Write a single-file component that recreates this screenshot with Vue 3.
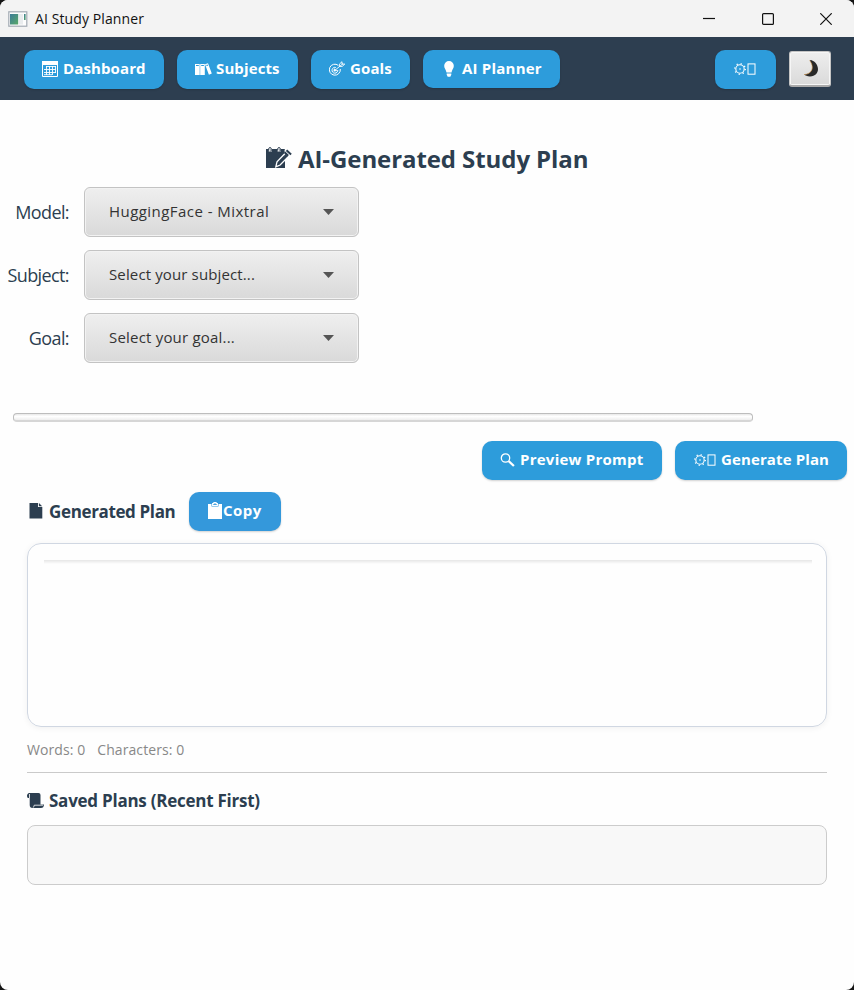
<script setup>
import { ref } from 'vue'

const fields = ref([
  { label: 'Model:', value: 'HuggingFace - Mixtral', kind: 'model' },
  { label: 'Subject:', value: 'Select your subject...', kind: 'subject' },
  { label: 'Goal:', value: 'Select your goal...', kind: 'goal' },
])
const words = ref(0)
const characters = ref(0)
</script>

<template>
  <div class="desktop">
    <div class="window">
      <header class="titlebar">
        <svg class="app-icon" width="20" height="16" viewBox="0 0 20 16">
          <defs>
            <linearGradient id="pane" x1="0" y1="0" x2="1" y2="1">
              <stop offset="0" stop-color="#3c7d98" />
              <stop offset="1" stop-color="#58a868" />
            </linearGradient>
          </defs>
          <rect x="0.8" y="0.8" width="18" height="14.4" fill="#fdfdfd" stroke="#a3abb3" stroke-width="1.2" />
          <rect x="2" y="3" width="8.2" height="10.5" fill="url(#pane)" />
          <rect x="11" y="3" width="4" height="10.5" fill="#e9ecee" />
          <rect x="16" y="3" width="1.6" height="6" fill="url(#pane)" />
        </svg>
        <span class="app-name">AI Study Planner</span>
        <div class="controls">
          <svg width="12" height="12" viewBox="0 0 12 12"><path d="M0 5.5h12" /></svg>
          <svg width="12" height="12" viewBox="0 0 12 12"><rect x="0.6" y="0.6" width="10.8" height="10.8" rx="1" /></svg>
          <svg width="12" height="12" viewBox="0 0 12 12"><path d="M0.3 0.3l11.4 11.4M11.7 0.3L0.3 11.7" /></svg>
        </div>
      </header>

      <nav class="nav">
        <button class="btn dashboard">
          <svg width="16" height="16" viewBox="0 0 16 16" fill="none" stroke="#fff">
            <path d="M0 0h16v4H0z" fill="#fff" stroke="none" />
            <path d="M.5 3v12.5h15V3" />
            <path d="M4 5.5h10M2 8.5h12M2 11.5h12M2 13.7h8M4.5 5v9M7.5 5v9M10.5 5v9M13.5 5v7" stroke-width=".9" />
          </svg>
          <span>Dashboard</span>
        </button>
        <button class="btn subjects">
          <svg width="17" height="12" viewBox="0 0 17 12" fill="#fff">
            <path fill-rule="evenodd" d="M0 1h4.7v11H0zM1 2v1h2.8V2zM5.2 1h4.6v11H5.2zM6.2 2v1h2.7V2z" />
            <path fill-rule="evenodd" d="M10 1.2L13 .2l3.8 10.4-2.9 1.1zM11.2 2l.5 1.2 1.3-.5-.4-1.2z" />
          </svg>
          <span>Subjects</span>
        </button>
        <button class="btn goals">
          <svg width="17" height="16" viewBox="0 0 17 16" fill="none" stroke="#fff">
            <path d="M9.3 4.4A5.5 5.5 0 1 0 11.3 8" stroke-width="1" />
            <path d="M6.8 6.5A2.9 2.9 0 1 0 8.8 9" stroke-width="1" />
            <path d="M6 9.3L14 2.6M10.4 5.4V3.1L13 .7v2.4h2.8L13.2 5.4z" stroke-width=".9" />
            <path d="M4.8 10.3l.4-2.600 2.600 1.900z" fill="#fff" stroke-width=".6" />
          </svg>
          <span>Goals</span>
        </button>
        <button class="btn planner">
          <svg width="10" height="16" viewBox="0 0 10 16" fill="#fff">
            <path d="M5 0a4.8 4.8 0 0 1 4.8 4.9c0 2.5-1.9 3.6-2.3 6.6h-5C2.1 8.5.2 7.4.2 4.9A4.8 4.8 0 0 1 5 0zM2.7 12.5h4.6v1.3L6.3 15.800H3.700l-1-2z" />
          </svg>
          <span>AI Planner</span>
        </button>
        <div class="spacer"></div>
        <button class="btn settings">
          <svg width="22" height="14" viewBox="0 0 22 14" fill="none" stroke="#fff">
            <circle cx="6" cy="7" r="4.200" stroke-width="1.100" />
            <circle cx="6" cy="7" r="5.300" stroke-width="1.300" stroke-dasharray="1.200 2.963" />
            <circle cx="6" cy="7" r=".8" fill="#fff" stroke="none" />
            <rect x="14" y="1.900" width="7" height="10.300" />
          </svg>
        </button>
        <button class="theme">
          <svg width="15" height="17" viewBox="0 0 15 17">
            <path d="M7 0c9.600 3.200 9.400 16.600-1.100 16.500C3.300 16.500 1.300 15.700 0 14.600 8.200 14.200 10.700 7.200 5.700.400z" fill="#292929" />
            <path d="M5.700.400c5 6.800 2.500 13.800-5.700 14.200" fill="none" stroke="#d99a4b" stroke-width=".6" />
          </svg>
        </button>
      </nav>

      <main class="content">
        <h1 class="title">
          <svg width="26" height="22" viewBox="0 0 26 22">
            <path d="M0 2h19v19H0z" fill="#2c3e50" />
            <path d="M3.500 0v4.500M7 0v0M5.200 1v3.500M12.300 0v4.500M14 1v3.500" stroke="#fefefe" stroke-width="1.500" />
            <path d="M2.800 3.500V1.200q1.200-1.500 2.400 0v3M11.800 3.500V1.200q1.200-1.500 2.400 0v3" fill="none" stroke="#2c3e50" stroke-width="1" />
            <path d="M9.800 19.800l1.200-5 8.500-8.800 3.200 3.200-8.600 8.800z" fill="#2c3e50" stroke="#fefefe" stroke-width="1.300" />
            <path d="M19 12.500V10l-.5-7.500H21l-2 2z" fill="#fefefe" />
            <path d="M18.600 5.300l3.600 3.400M20.500 3.300l4.600 4.200" stroke="#2c3e50" stroke-width="2" />
          </svg>
          <span>AI-Generated Study Plan</span>
        </h1>

        <section class="form">
          <template v-for="field in fields" :key="field.kind">
            <label class="label">{{ field.label }}</label>
            <div class="combo">
              <span :class="'value-' + field.kind">{{ field.value }}</span>
              <svg width="11" height="6" viewBox="0 0 11 6"><path d="M0 0h11L5.500 6z" fill="#555" /></svg>
            </div>
          </template>
        </section>

        <div class="progress"></div>

        <div class="actions">
          <button class="btn preview">
            <svg width="15" height="14" viewBox="0 0 15 14" fill="none" stroke="#fff">
              <circle cx="5.500" cy="5" r="4.200" stroke-width="1.300" />
              <path d="M8.600 8l5.300 5" stroke-width="2.300" />
            </svg>
            <span>Preview Prompt</span>
          </button>
          <button class="btn generate">
            <svg width="22" height="14" viewBox="0 0 22 14" fill="none" stroke="#fff">
              <circle cx="6" cy="7" r="4.200" stroke-width="1.100" />
              <circle cx="6" cy="7" r="5.300" stroke-width="1.300" stroke-dasharray="1.200 2.963" />
              <circle cx="6" cy="7" r=".8" fill="#fff" stroke="none" />
              <rect x="14" y="1.900" width="7" height="10.300" />
            </svg>
            <span>Generate Plan</span>
          </button>
        </div>

        <section class="plan">
          <div class="plan-head">
            <h2 class="heading generated">
              <svg width="16" height="16" viewBox="0 0 16 16">
                <path d="M.500 0h8.500v4H13.300v11.500H.5z" fill="#2c3e50" />
                <path d="M9.900 0l3.300 3.300H9.900z" fill="#2c3e50" />
              </svg>
              <span>Generated Plan</span>
            </h2>
            <button class="btn copy">
              <svg width="14" height="17" viewBox="0 0 14 17">
                <path d="M0 2h3.500v2.500h7V2H14v15H0z" fill="#fff" />
                <path d="M4.600 3.500V1.600h1.300V.6h2.200v1h1.300v1.900z" fill="none" stroke="#fff" stroke-width="1.100" />
              </svg>
              <span>Copy</span>
            </button>
          </div>
          <div class="output"><div class="output-edge"></div></div>
          <div class="stats"><span>Words: {{ words }}</span><span class="chars">Characters: {{ characters }}</span></div>
          <hr class="rule" />
          <h2 class="heading saved">
            <svg width="17" height="16" viewBox="0 0 17 16">
              <path d="M2 0h9.500q2 0 2 2v9.500H17q-.2 3.500-3 3.500H5.500q-2.800 0-2.800-3V5H.8Q-.5 3.500.3 1.500 1 .2 2 0z" fill="#2c3e50" />
              <path d="M2.500 1v4M16 12.200H7.200q.2 1.800-1.400 2.300" fill="none" stroke="#fff" stroke-width=".8" />
            </svg>
            <span>Saved Plans (Recent First)</span>
          </h2>
          <div class="saved-list"></div>
        </section>
      </main>
    </div>
  </div>
</template>

<style>
body {
  background: #151515;
}
</style>

<style scoped>
* {
  box-sizing: border-box;
}
.desktop {
  width: 854px;
  height: 990px;
  background: #151515;
  font-family: "Open Sans", "Noto Sans", sans-serif;
  color: #2c3e50;
}
.window {
  display: flex;
  flex-direction: column;
  height: 990px;
  border-radius: 8px;
  overflow: hidden;
  background: #fefefe;
}
svg {
  display: block;
  flex: none;
}
span {
  white-space: nowrap;
}
.titlebar {
  display: flex;
  align-items: center;
  height: 37px;
  padding: 0 22px 0 8px;
  background: #f3f3f3;
  color: #111;
}
.app-name {
  margin-left: 7px;
  font-size: 14px;
  letter-spacing: 0.1px;
}
.controls {
  display: flex;
  gap: 46.5px;
  margin-left: auto;
}
.controls svg {
  fill: none;
  stroke: #111;
  stroke-width: 1.2;
}
.nav {
  display: flex;
  align-items: flex-start;
  gap: 13px;
  height: 63px;
  padding: 13px 23px 0 24px;
  background: #2d3e50;
}
.spacer {
  flex: 1;
}
.btn {
  display: flex;
  align-items: center;
  height: 39px;
  padding: 0 0 2px 18px;
  border: 0;
  border-radius: 10px;
  background: #2d9cdb;
  box-shadow: 0 1px 2px rgba(0, 0, 0, 0.18);
  color: #fff;
  font-family: inherit;
  font-size: 15px;
  font-weight: 700;
  line-height: 20px;
}
.btn span {
  margin-left: 5px;
  padding-bottom: 2px;
  letter-spacing: 0.12px;
}
.dashboard { width: 140px; }
.subjects { width: 121px; }
.subjects span { margin-left: 4px; }
.goals { width: 99px; }
.goals span { margin-left: 4px; }
.planner {
  width: 137px;
  height: 38px;
  padding-left: 21px;
  padding-bottom: 0;
}
.planner span {
  margin-left: 8px;
  letter-spacing: 0.22px;
}
.settings {
  width: 61px;
  padding-left: 19px;
}
.theme {
  display: flex;
  align-items: center;
  justify-content: center;
  width: 42px;
  height: 36px;
  margin-top: 1px;
  padding: 0 0 1px 3px;
  border: 1px solid #c4c4c4;
  border-bottom: 2px solid #aaa;
  border-radius: 3px;
  background: linear-gradient(#eee, #dadada);
  box-shadow: inset 0 0 0 1px #f6f6f6;
}
.content {
  display: flex;
  flex-direction: column;
}
.title {
  display: flex;
  align-items: center;
  height: 34px;
  margin: 42px 0 11px 266px;
  font-size: 24px;
  font-weight: 700;
  line-height: 34px;
}
.title svg {
  margin-bottom: 2px;
}
.title span {
  margin-left: 6px;
  letter-spacing: -0.08px;
}
.form {
  display: grid;
  grid-template-columns: 69px 275px;
  grid-auto-rows: 50px;
  column-gap: 15px;
  row-gap: 13px;
}
.label {
  align-self: center;
  text-align: right;
  font-size: 18px;
  font-weight: 400;
  letter-spacing: -0.6px;
}
.combo {
  display: flex;
  align-items: center;
  justify-content: space-between;
  padding: 0 24px 1px 24px;
  border: 1px solid #c3c3c3;
  border-radius: 6px;
  background: linear-gradient(#efefef, #d9d9d9);
  box-shadow: inset 0 0 0 1px #f2f2f2;
  color: #333;
  font-size: 15px;
}
.combo span {
  padding-bottom: 2px;
}
.value-model { letter-spacing: 0.45px; }
.value-subject { letter-spacing: 0.13px; }
.value-goal { letter-spacing: 0.2px; }
.progress {
  width: 740px;
  height: 9px;
  margin: 50px 0 0 13px;
  border: 1px solid #bdbdbd;
  border-bottom: 2px solid #d6d6d6;
  border-radius: 4px;
  background: linear-gradient(#e8e8e8, #fff 40%, #eee);
}
.actions {
  display: flex;
  justify-content: flex-end;
  gap: 13px;
  margin: 19px 7px 0 0;
}
.preview { width: 180px; }
.preview span { letter-spacing: 0.25px; }
.generate {
  width: 172px;
  padding-left: 19px;
}
.plan {
  display: flex;
  flex-direction: column;
  width: 800px;
  margin: 12px 0 0 27px;
}
.plan-head {
  display: flex;
  align-items: center;
  height: 39px;
}
.heading {
  display: flex;
  align-items: center;
  height: 24px;
  margin: 0;
  font-size: 17px;
  font-weight: 700;
  line-height: 24px;
}
.heading svg {
  margin-bottom: 1px;
}
.generated {
  width: 162px;
  padding-left: 2px;
}
.generated span {
  margin-left: 4px;
  letter-spacing: -0.36px;
}
.copy {
  width: 92px;
  padding-left: 19px;
  background: #3498db;
}
.copy span {
  margin-left: 1px;
  letter-spacing: 0.5px;
}
.output {
  height: 184px;
  margin-top: 12px;
  padding: 16px 14px 0 16px;
  border: 1px solid #d0d7e2;
  border-radius: 14px;
  box-shadow: 0 1px 6px rgba(0, 0, 0, 0.06);
}
.output-edge {
  height: 4px;
  background: linear-gradient(#e6e6e6, #fefefe);
}
.stats {
  display: flex;
  height: 20px;
  margin-top: 13px;
  color: #888;
  font-size: 14px;
  line-height: 20px;
  letter-spacing: 0.08px;
}
.chars {
  margin-left: 12px;
}
.rule {
  width: 100%;
  height: 1px;
  margin: 12px 0 0;
  border: 0;
  background: #cacaca;
}
.saved {
  margin-top: 16px;
}
.saved span {
  margin-left: 5px;
  letter-spacing: -0.25px;
}
.saved-list {
  height: 60px;
  margin-top: 12px;
  border: 1px solid #ccc;
  border-radius: 8px;
  background: #f8f8f8;
}
</style>
